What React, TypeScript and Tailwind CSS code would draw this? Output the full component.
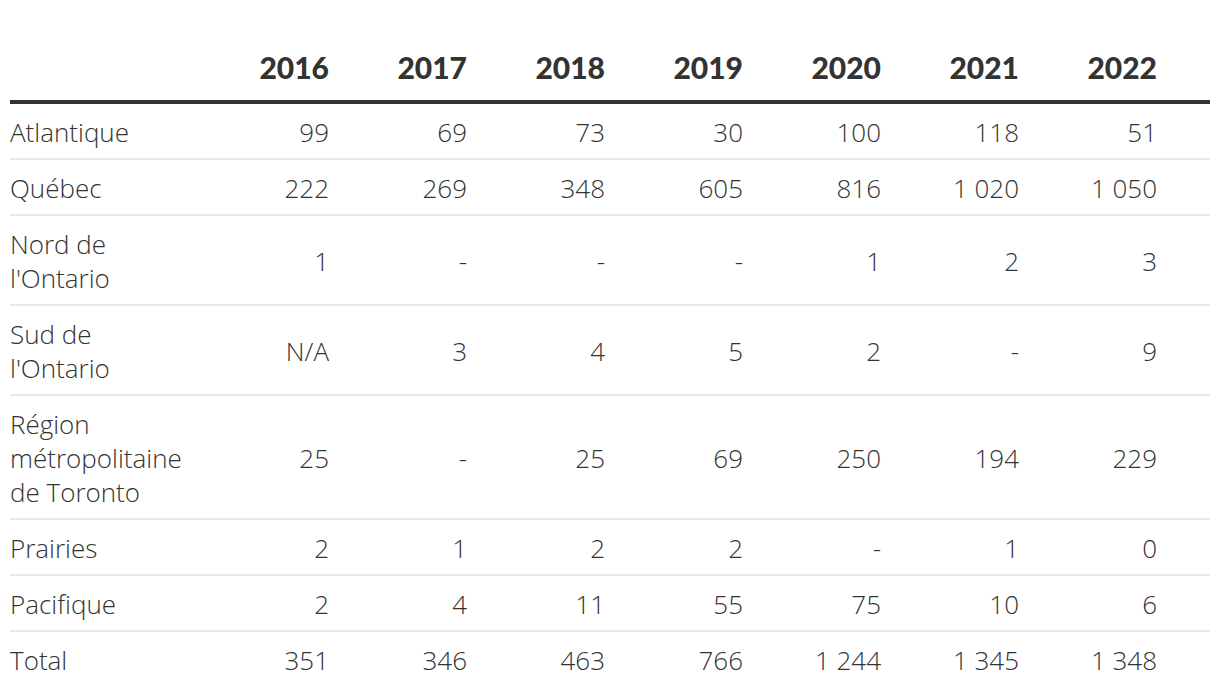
import React from "react";

const years = ["2016", "2017", "2018", "2019", "2020", "2021", "2022"];

const rows: { label: string[]; values: string[] }[] = [
  { label: ["Atlantique"], values: ["99", "69", "73", "30", "100", "118", "51"] },
  { label: ["Québec"], values: ["222", "269", "348", "605", "816", "1 020", "1 050"] },
  { label: ["Nord de", "l'Ontario"], values: ["1", "-", "-", "-", "1", "2", "3"] },
  { label: ["Sud de", "l'Ontario"], values: ["N/A", "3", "4", "5", "2", "-", "9"] },
  {
    label: ["Région", "métropolitaine", "de Toronto"],
    values: ["25", "-", "25", "69", "250", "194", "229"],
  },
  { label: ["Prairies"], values: ["2", "1", "2", "2", "-", "1", "0"] },
  { label: ["Pacifique"], values: ["2", "4", "11", "55", "75", "10", "6"] },
  { label: ["Total"], values: ["351", "346", "463", "766", "1 244", "1 345", "1 348"] },
];

export default function App() {
  return (
    <div className="w-[1220px] h-[696px] bg-white px-[10px] text-[#333333] overflow-hidden">
      <div className="grid grid-cols-[181px_repeat(7,138px)_53px] border-b-4 border-[#333333] pt-[50px] pb-[16px] text-[30px] leading-[34px] font-black font-['Lato',sans-serif]">
        <div />
        {years.map((y) => (
          <div key={y} className="text-right">
            {y}
          </div>
        ))}
        <div />
      </div>
      {rows.map((r, i) => (
        <div
          key={i}
          className={
            "grid grid-cols-[181px_repeat(7,138px)_53px] items-center pt-[11px] pb-[9px] text-[26px] leading-[34px] font-light font-['Open_Sans',sans-serif] " +
            (i < rows.length - 1 ? "border-b-2 border-[#e8e8e8]" : "")
          }
        >
          <div className="whitespace-nowrap">
            {r.label.map((l, j) => (
              <div key={j}>{l}</div>
            ))}
          </div>
          {r.values.map((v, j) => (
            <div key={j} className="text-right">
              {v}
            </div>
          ))}
          <div />
        </div>
      ))}
    </div>
  );
}
